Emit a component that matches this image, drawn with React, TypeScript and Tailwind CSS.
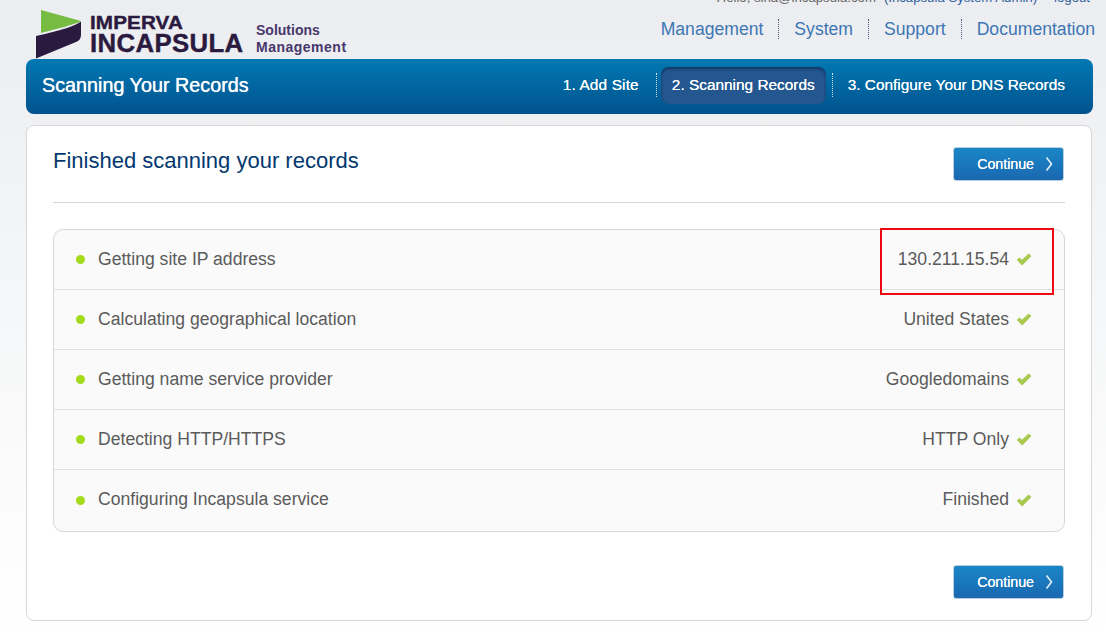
const font = { fontFamily: '"Liberation Sans", Arial, sans-serif' };

function Check() {
  return (
    <svg width="16" height="13" viewBox="0 0 16 13" className="shrink-0">
      <path d="M0.8 7 L3.4 4.4 L6 6.8 L12.6 0.6 L15.4 3 L6.2 12.6 Z" fill="#a8c84e" />
    </svg>
  );
}

function ContinueButton() {
  return (
    <button className="flex h-[34px] w-[111px] items-center justify-end rounded-[3px] border border-[#b9cfe0] bg-gradient-to-b from-[#1a87c7] to-[#1a68b0] pr-[10px] text-[14.3px] tracking-[-0.05px] text-white [text-shadow:0_0_0.6px_white]">
      <span className="mr-[11px] mt-[1px]">Continue</span>
      <svg width="8" height="14" viewBox="0 0 8 14">
        <path d="M1.5 0.5 L6.5 7 L1.5 13.5" fill="none" stroke="#e6f0f8" strokeWidth="1.6" />
      </svg>
    </button>
  );
}

const rows = [
  ["Getting site IP address", "130.211.15.54"],
  ["Calculating geographical location", "United States"],
  ["Getting name service provider", "Googledomains"],
  ["Detecting HTTP/HTTPS", "HTTP Only"],
  ["Configuring Incapsula service", "Finished"],
];

function NavSep() {
  return <span className="mx-[15px] h-[20px] border-l border-dotted border-[#4a5a78]" />;
}

function StepSep() {
  return <span className="block h-[24px] border-l border-dotted border-[#cfe2ef]" />;
}

export default function App() {
  return (
    <div
      style={font}
      className="relative h-[634px] w-[1106px] overflow-hidden bg-gradient-to-b from-[#ecedf0] via-[#f6f7f8] to-white"
    >
      <header className="relative flex h-[59px] pl-[36px] pr-[11px]">
        <div className="mt-[10px] flex">
          <svg width="46" height="49" viewBox="0 0 46 49" className="shrink-0">
            <path d="M5 0 L45 11 C41 14 20 19 5 23 Z" fill="#76bc43" />
            <path d="M0 26 C18 22 38 17 45 11.5 L45 24 C45 29 43 31 40 32 L0 48.5 Z" fill="#2b1a3f" />
          </svg>
          <div className="ml-[8px] mt-[4px] flex w-[154px] flex-col font-bold text-[#2b1a3f] [-webkit-text-stroke:0.4px_#2b1a3f]">
            <span className="h-[18px] origin-left scale-x-[1.18] whitespace-nowrap text-[17.5px] leading-[18px] tracking-[0.1px]">IMPERVA</span>
            <span className="origin-left scale-x-[1.03] whitespace-nowrap text-[25px] leading-[22px] tracking-[0.35px]">INCAPSULA</span>
          </div>
          <div className="ml-[12px] mt-[12px] flex flex-col text-[14px] font-bold leading-[17px] text-[#47376b]">
            <span>Solutions</span>
            <span className="tracking-[0.5px]">Management</span>
          </div>
        </div>
        <div className="ml-auto flex flex-col items-end">
          <div className="mt-[-10px] h-[16px] whitespace-nowrap pr-[5px] text-[13.2px] leading-[16px] text-[#666]">
            Hello, sina@incapsula.com
            <span className="ml-[8px] text-[#2f5f9f]">(Incapsula System Admin)</span>
            <span className="ml-[17px] text-[#2f5f9f]">logout</span>
          </div>
          <nav className="mt-[13px] flex items-center text-[17.6px] leading-[20px] text-[#3d76b4]">
            <span>Management</span>
            <NavSep />
            <span>System</span>
            <NavSep />
            <span>Support</span>
            <NavSep />
            <span>Documentation</span>
          </nav>
        </div>
      </header>

      <div className="mx-[26px] flex h-[55px] w-[1067px] items-center rounded-[8px] bg-gradient-to-b from-[#0279b3] to-[#01538e] pl-[16px] pr-[28px] text-white">
        <h1 className="-mt-[1px] text-[19.8px] [text-shadow:0_0_0.7px_white]">Scanning Your Records</h1>
        <div className="-mt-[3px] ml-auto flex items-center text-[15.4px] [text-shadow:0_0_0.6px_white]">
          <span className="tracking-[0.15px]">1. Add Site</span>
          <span className="ml-[17px] mr-[4px]"><StepSep /></span>
          <span className="flex h-[37px] items-center rounded-[8px] bg-[#24578f] px-[11px] shadow-[inset_0_2px_3px_rgba(5,30,70,0.6)]">
            2. Scanning Records
          </span>
          <span className="ml-[6px] mr-[15px]"><StepSep /></span>
          <span>3. Configure Your DNS Records</span>
        </div>
      </div>

      <main className="mx-[26px] mt-[11px] h-[496px] w-[1066px] rounded-[8px] border border-[#d8d8d8] bg-white px-[26px]">
        <div className="flex h-[77px] justify-between border-b border-[#d6d6d6] pr-[1px]">
          <h2 className="mt-[21px] text-[22px] leading-[28px] text-[#03386f]">Finished scanning your records</h2>
          <div className="mt-[21px]"><ContinueButton /></div>
        </div>
        <div className="mt-[26px] w-[1012px] divide-y divide-[#e2e2e2] rounded-[10px] border border-[#d6d6d6] bg-[#fafafa] pb-[1px]">
          {rows.map(([label, value]) => (
            <div key={label} className="flex h-[60px] items-center pl-[22px] pr-[32px] text-[17.6px] text-[#5b5b5b]">
              <span className="h-[9px] w-[9px] rounded-full bg-[#a2da1c]" />
              <span className="-mt-[1px] ml-[13px]">{label}</span>
              <span className="-mt-[1px] ml-auto mr-[7px]">{value}</span>
              <Check />
            </div>
          ))}
        </div>
        <div className="mt-[33px] flex justify-end pr-[1px]"><ContinueButton /></div>
      </main>

      <div className="absolute left-[880px] top-[228px] h-[67px] w-[174px] border-2 border-[#ee0a12]" />
    </div>
  );
}
